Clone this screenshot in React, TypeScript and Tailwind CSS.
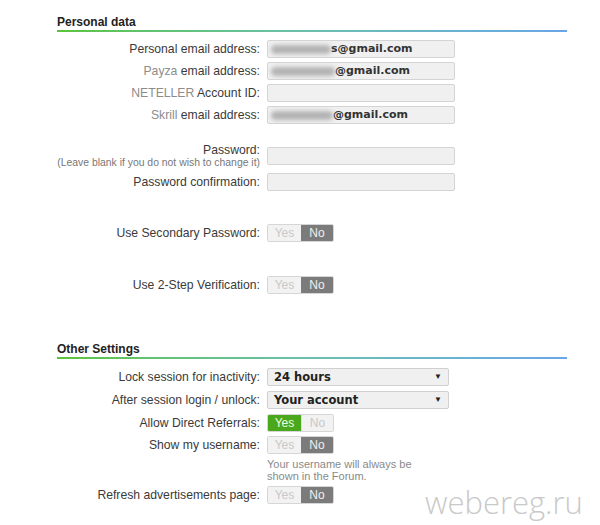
import React from "react";

const labelCls =
  "w-[210px] shrink-0 text-right pr-[7px] text-[12.2px] text-[#3a3a3a] leading-[14px]";
const font = { fontFamily: '"Liberation Sans", Arial, sans-serif' };

function Heading({ children }: { children: React.ReactNode }) {
  return (
    <div>
      <div className="h-[16px] text-[12px] font-bold text-[#222] leading-[16px]">{children}</div>
      <div className="h-[2px] w-[510px] bg-gradient-to-r from-[#5cc43a] via-[#6cbfae] to-[#6aa6e8]" />
    </div>
  );
}

function Input({ value, blurW }: { value?: string; blurW?: number }) {
  return (
    <div className="h-[18px] w-[188px] rounded-[2px] border border-[#d4d4d4] bg-[#f0f0f0] flex items-center pl-[3px] overflow-hidden">
      {value && (
        <>
          <span
            className="h-[9px] rounded-full bg-[#9a9a9a] blur-[2px] opacity-70"
            style={{ width: blurW }}
          />
          <span
            className="text-[11px] font-bold text-[#333] leading-[14px]"
            style={{ fontFamily: '"DejaVu Sans", Verdana, sans-serif' }}
          >
            {value}
          </span>
        </>
      )}
    </div>
  );
}

function Select({ value }: { value: string }) {
  return (
    <div className="h-[18px] w-[182px] rounded-[2px] border border-[#d0d0d0] bg-[#f0f0f0] flex items-center justify-between pl-[6px] pr-[6px]">
      <span
        className="text-[11.5px] font-bold text-[#222] leading-[14px]"
        style={{ fontFamily: '"DejaVu Sans", Verdana, sans-serif' }}
      >
        {value}
      </span>
      <span className="text-[8px] text-[#222]">▼</span>
    </div>
  );
}

function Toggle({ yes }: { yes?: boolean }) {
  return (
    <div className="h-[18px] w-[67px] flex rounded-[2px] overflow-hidden border border-[#d6d6d6] text-[12px] leading-[16px]">
      <div
        className={
          yes
            ? "w-[33px] bg-[#4aa81c] text-[#eaffe0] flex items-center justify-center"
            : "w-[33px] bg-[#f2f2f2] text-[#c8c8c8] flex items-center justify-center"
        }
      >
        Yes
      </div>
      <div
        className={
          yes
            ? "flex-1 bg-[#f2f2f2] text-[#c8c8c8] flex items-center justify-center border-l border-[#ddd]"
            : "flex-1 bg-[#7b7b7b] text-[#f0f0f0] flex items-center justify-center"
        }
      >
        No
      </div>
    </div>
  );
}

function Row({ label, children, className = "" }: { label: React.ReactNode; children: React.ReactNode; className?: string }) {
  return (
    <div className={"flex items-center h-[22px] " + className}>
      <div className={labelCls}>{label}</div>
      {children}
    </div>
  );
}

const lite = "text-[#8c8c8c]";

export default function App() {
  return (
    <div className="relative w-[600px] h-[525px] bg-white overflow-hidden" style={font}>
      <div className="pl-[57px] pt-[14px]">
        <Heading>Personal data</Heading>
        <div className="mt-[6px]">
          <Row label="Personal email address:">
            <Input value="s@gmail.com" blurW={60} />
          </Row>
          <Row label={<><span className={lite}>Payza</span> email address:</>}>
            <Input value="@gmail.com" blurW={64} />
          </Row>
          <Row label={<><span className={lite}>NETELLER</span> Account ID:</>}>
            <Input />
          </Row>
          <Row label={<><span className={lite}>Skrill</span> email address:</>}>
            <Input value="@gmail.com" blurW={62} />
          </Row>
        </div>

        <div className="flex mt-[18px]">
          <div className="w-[210px] shrink-0 text-right pr-[7px]">
            <div className="text-[12.2px] text-[#3a3a3a] leading-[13px]">Password:</div>
            <div className="text-[10.4px] text-[#777] leading-[11px] whitespace-nowrap">
              (Leave blank if you do not wish to change it)
            </div>
          </div>
          <div className="mt-[3px]">
            <Input />
          </div>
        </div>
        <Row label="Password confirmation:" className="mt-[3px]">
          <Input />
        </Row>

        <Row label="Use Secondary Password:" className="mt-[29px]">
          <Toggle />
        </Row>
        <Row label="Use 2-Step Verification:" className="mt-[30px]">
          <Toggle />
        </Row>

        <div className="mt-[45px]">
          <Heading>Other Settings</Heading>
        </div>
        <Row label="Lock session for inactivity:" className="mt-[7px]">
          <Select value="24 hours" />
        </Row>
        <Row label="After session login / unlock:" className="mt-[1px]">
          <Select value="Your account" />
        </Row>
        <Row label="Allow Direct Referrals:" className="mt-[1px]">
          <Toggle yes />
        </Row>
        <Row label="Show my username:">
          <Toggle />
        </Row>
        <div className="flex mt-[2px]">
          <div className="w-[210px] shrink-0" />
          <div className="text-[11px] text-[#8a8a8a] leading-[12px]">
            Your username will always be
            <br />
            shown in the Forum.
          </div>
        </div>
        <Row label="Refresh advertisements page:" className="mt-[2px]">
          <Toggle />
        </Row>
      </div>

      <div
        className="absolute left-[425px] top-[485px] text-[31px] font-light text-[#c9c9c9] leading-[34px] whitespace-nowrap"
        style={{ fontFamily: '"Open Sans", sans-serif' }}
      >
        webereg.ru
      </div>
    </div>
  );
}
